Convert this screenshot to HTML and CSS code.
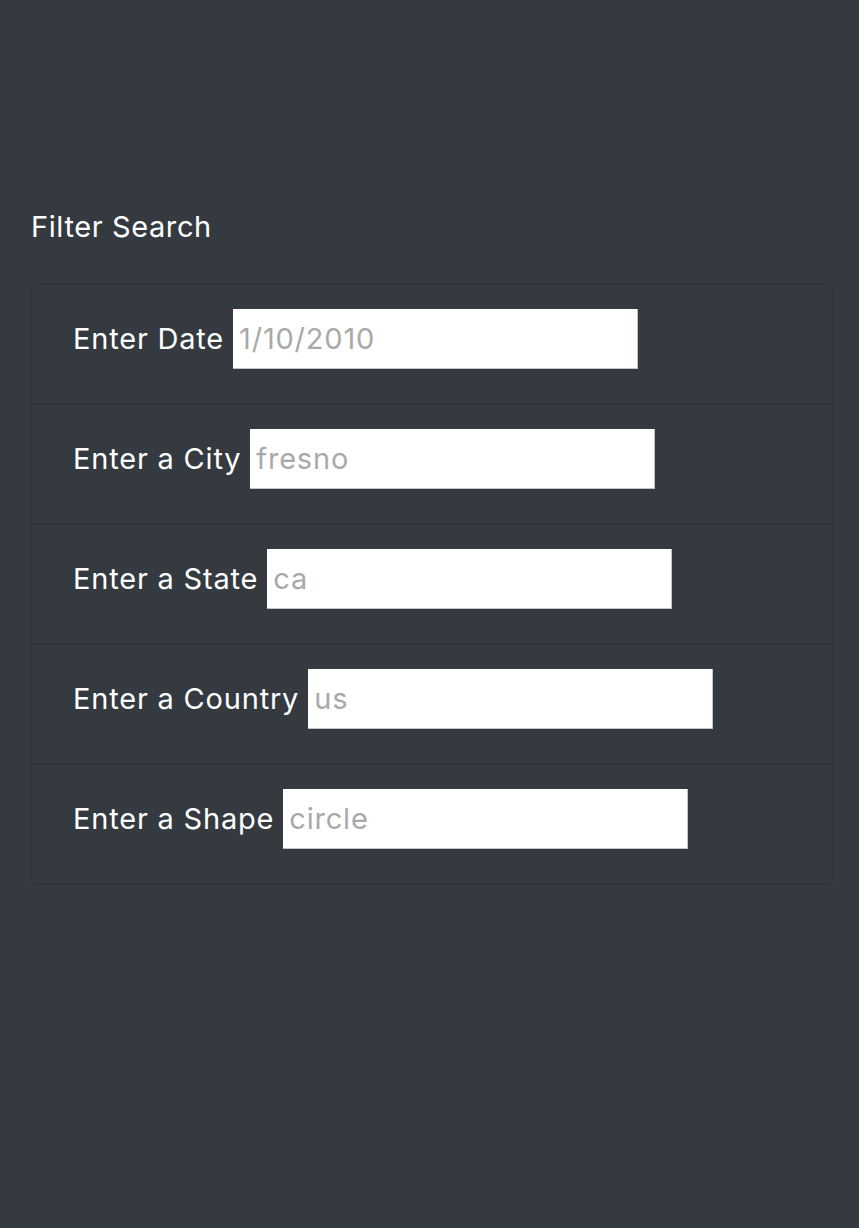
FILE: index.html
```html
<!DOCTYPE html>
<html>
<head>
<meta charset="utf-8">
<link rel="stylesheet" href="styles.css">
</head>
<body>
<div class="page">
  <h5 class="title">Filter Search</h5>
  <ul class="list">
    <li class="item"><label class="lbl" for="d">Enter Date</label> <input id="d" class="inp" type="text" placeholder="1/10/2010"></li>
    <li class="item"><label class="lbl" for="c">Enter a City</label> <input id="c" class="inp" type="text" placeholder="fresno"></li>
    <li class="item"><label class="lbl" for="s">Enter a State</label> <input id="s" class="inp" type="text" placeholder="ca"></li>
    <li class="item"><label class="lbl" for="co">Enter a Country</label> <input id="co" class="inp" type="text" placeholder="us"></li>
    <li class="item"><label class="lbl" for="sh">Enter a Shape</label> <input id="sh" class="inp" type="text" placeholder="circle"></li>
  </ul>
</div>
</body>
</html>
```
FILE: styles.css
```css
html, body {
  margin: 0;
  padding: 0;
  background: #343a40;
  color: #ffffff;
  font-family: Inter, "Liberation Sans", sans-serif;
}
.page {
  padding: 209px 26px 0 31px;
}
.title {
  margin: 0 0 39px 0;
  font-size: 29px;
  font-weight: 400;
  line-height: 36px;
  letter-spacing: 0.6px;
}
.list {
  list-style: none;
  margin: 0;
  padding: 0;
  border: 1px solid #2e3338;
  border-radius: 5px;
}
.item {
  display: flex;
  align-items: baseline;
  gap: 9px;
  padding: 24px 41px 35px;
  border-top: 1px solid #2e3338;
}
.item:first-child {
  border-top: none;
}
.lbl {
  font-size: 29px;
  line-height: 34px;
  letter-spacing: 0.8px;
}
.inp {
  width: 405px;
  height: 60px;
  box-sizing: border-box;
  margin: 0;
  padding: 0 6px;
  border: none;
  border-right: 1px solid #c4c4c4;
  border-bottom: 1px solid #c4c4c4;
  background: #ffffff;
  font-family: inherit;
  font-size: 29px;
  letter-spacing: 0.8px;
  color: #222;
  outline: none;
}
.inp::placeholder {
  color: #a9a9a9;
}
```
